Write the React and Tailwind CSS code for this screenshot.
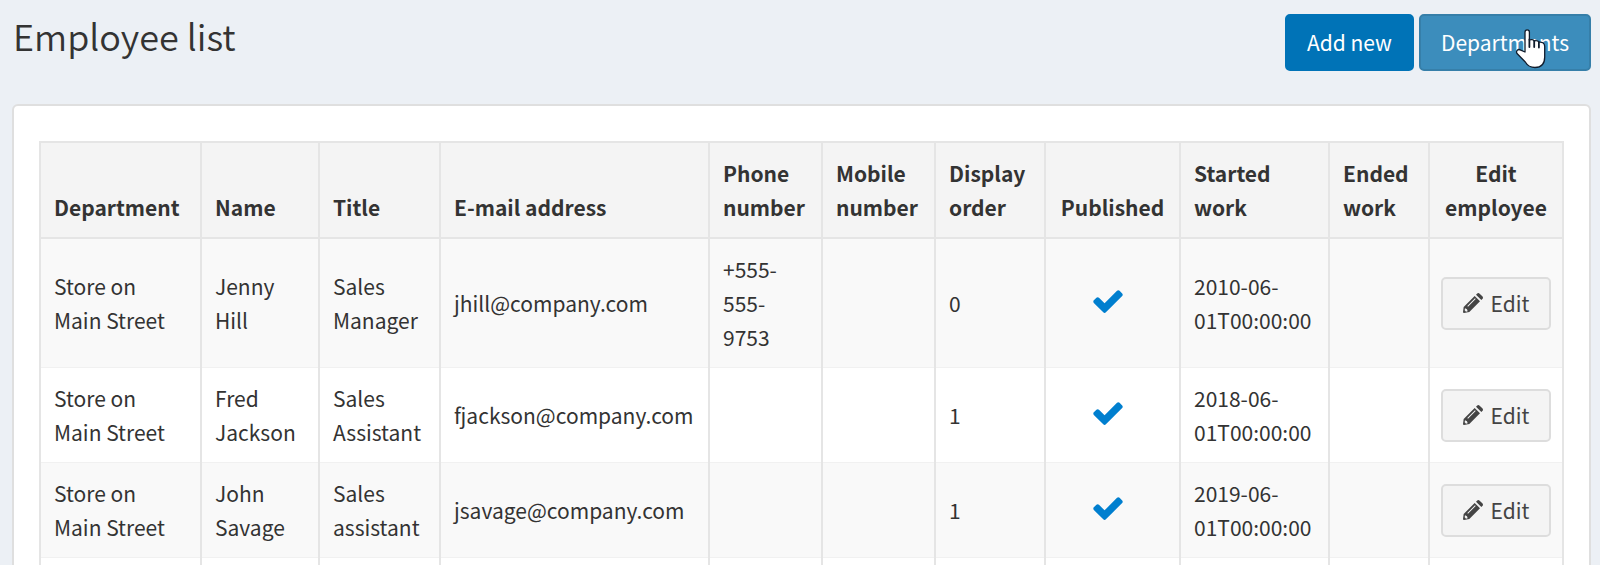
const columns = [
  { label: "Department", width: "w-[161px]" },
  { label: "Name", width: "w-[118px]" },
  { label: "Title", width: "w-[121px]" },
  { label: "E-mail address", width: "w-[269px]" },
  { label: "Phone number", width: "w-[113px]" },
  { label: "Mobile number", width: "w-[113px]" },
  { label: "Display order", width: "w-[110px]" },
  { label: "Published", width: "w-[135px]", center: true },
  { label: "Started work", width: "w-[149px]" },
  { label: "Ended work", width: "w-[100px]" },
  { label: "Edit employee", width: "w-[134px]", center: true },
];

const employees = [
  { name: "Jenny Hill", title: "Sales Manager", email: "jhill@company.com", phone: "+555-555-9753", order: 0, started: "2010-06-01T00:00:00" },
  { name: "Fred Jackson", title: "Sales Assistant", email: "fjackson@company.com", phone: "", order: 1, started: "2018-06-01T00:00:00" },
  { name: "John Savage", title: "Sales assistant", email: "jsavage@company.com", phone: "", order: 1, started: "2019-06-01T00:00:00" },
];

const edges = "border-x-2 border-b border-x-[#e5e5e5] border-b-[#f1f1f1]";
const cell = `${edges} p-[13px]`;

function CheckIcon() {
  return (
    <svg role="img" aria-label="Published" viewBox="0 0 1792 1792" className="size-[34px]" fill="#007fcf">
      <path d="M1671 566q0 40-28 68l-724 724-136 136q-28 28-68 28t-68-28l-136-136-362-362q-28-28-28-68t28-68l136-136q28-28 68-28t68 28l294 295 656-657q28-28 68-28t68 28l136 136q28 28 28 68z" />
    </svg>
  );
}

function PencilIcon() {
  return (
    <svg aria-hidden="true" viewBox="0 0 60 60" className="size-5" fill="currentColor">
      <path d="M39 5L42 2Q46-2 50 2L58 10Q62 14 58 18L55 21Z" />
      <path fillRule="evenodd" d="M35 9L51 25L19 57L3 60Q0 60 0 57L2 42ZM6 46L5 52L9 56L14 55L12 49ZM13 39L15 41L38 18L36 16Z" />
    </svg>
  );
}

function HandCursor() {
  return (
    <svg aria-hidden="true" viewBox="0 0 32 42" className="pointer-events-none absolute top-3 right-[42px] h-[42px] w-8">
      <path
        d="M10 24V4a2.200 2.200 0 0 1 4.400 0V12c1.500-.8 4-.4 4.800 1 1.700-.6 4-.1 4.700 1.200 2.800-.5 5.800.8 5.800 4V29c0 6.500-3.500 10.500-9.700 10.500-5 0-7.700-2-9.700-5.500L2 25.500c-1.400-2.600 1-5 3.800-3.400z"
        fill="#fff" stroke="#101c2c" strokeWidth="1.300" strokeLinejoin="round"
      />
      <path d="M14.400 11.500V19M19.200 13V19M23.900 14.200V19.500" fill="none" stroke="#101c2c" strokeWidth="1.800" strokeLinecap="round" />
    </svg>
  );
}

export default function App() {
  return (
    <div className="h-screen overflow-hidden bg-[#ecf0f5] pt-3.5 pr-[9px] pl-3 font-['Noto_Sans_CJK_SC',sans-serif] text-[21px] leading-[34px] text-[#333]">
      <header className="mb-[33px] flex items-start justify-between">
        <h1 className="pl-px text-4xl leading-[42px] font-[350]">Employee list</h1>
        <div className="flex gap-[5px]">
          <button type="button" className="rounded-[5px] border-2 border-[#0073b7] bg-[#0073b7] px-5 py-2.5 leading-[33px] text-white">Add new</button>
          <button type="button" className="relative rounded-[5px] border-2 border-[#367fa9] bg-[#3c8dbc] px-5 py-2.5 leading-[33px] text-white">
            Departments
            <HandCursor />
          </button>
        </div>
      </header>
      <main className="rounded-md border-2 border-[#dfdfdf] bg-white pt-[35px] pr-[26px] pb-9 pl-[25px]">
        <table className="w-full table-fixed border-collapse border-2 border-[#e5e5e5]">
          <thead>
            <tr className="bg-[#f4f4f4]">
              {columns.map((c) => (
                <th key={c.label} scope="col" className={`${c.width} ${c.center ? "px-2 text-center" : "px-[13px] text-left"} border-2 border-[#e5e5e5] py-[13px] align-bottom font-bold`}>
                  {c.label}
                </th>
              ))}
            </tr>
          </thead>
          <tbody>
            {employees.map((e) => (
              <tr key={e.name} className="odd:bg-[#f9f9f9]">
                <td className={cell}>Store on Main Street</td>
                <td className={cell}>{e.name}</td>
                <td className={cell}>{e.title}</td>
                <td className={cell}>{e.email}</td>
                <td className={cell}>{e.phone}</td>
                <td className={cell}></td>
                <td className={cell}>{e.order}</td>
                <td className={edges}>
                  <div className="flex justify-center pr-2.5 pb-1">
                    <CheckIcon />
                  </div>
                </td>
                <td className={cell}>{e.started}</td>
                <td className={cell}></td>
                <td className={`${edges} text-center`}>
                  <button type="button" className="inline-flex items-center gap-2 rounded-[5px] border-2 border-[#ddd] bg-[#f4f4f4] px-5 py-2 align-middle leading-[33px] text-[#444]">
                    <PencilIcon />
                    Edit
                  </button>
                </td>
              </tr>
            ))}
            <tr className="h-24">
              {columns.map((c) => (
                <td key={c.label} className={cell}></td>
              ))}
            </tr>
          </tbody>
        </table>
      </main>
    </div>
  );
}
